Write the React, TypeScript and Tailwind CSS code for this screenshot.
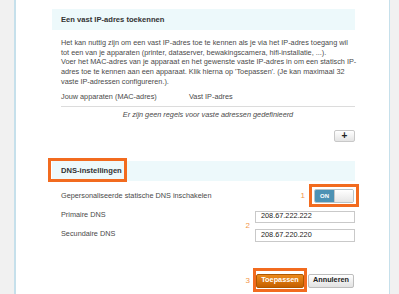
export default function App() {
  return (
    <div className="w-[399px] h-[294px] overflow-hidden bg-[#f1f1f1] flex font-['Liberation_Sans',Arial,sans-serif] text-[7.3px] text-[#4a4a4a]">
      <div className="ml-[14px] w-[376px] h-full bg-white border-l-2 border-r border-[#c6e0eb] pl-[36px] pr-[34px] pt-[9px]">
        <div className="h-[21px] bg-[#edf9fb] flex items-center pl-[9px] font-bold text-[#333] text-[7.6px]">
          Een vast IP-adres toekennen
        </div>
        <div className="pl-[9px] mt-[8px] leading-[9.7px] whitespace-nowrap">
          Het kan nuttig zijn om een vast IP-adres toe te kennen als je via het IP-adres toegang wil
          <br />
          tot een van je apparaten (printer, dataserver, bewakingscamera, hifi-installatie, ...).
          <br />
          Voer het MAC-adres van je apparaat en het gewenste vaste IP-adres in om een statisch IP-
          <br />
          adres toe te kennen aan een apparaat. Klik hierna op 'Toepassen'. (Je kan maximaal 32
          <br />
          vaste IP-adressen configureren.).
        </div>
        <div className="ml-[9px] mt-[5px] pb-[5px] h-[15px] leading-[10px] flex border-b border-[#dcdcdc]">
          <div className="w-[128px]">Jouw apparaten (MAC-adres)</div>
          <div>Vast IP-adres</div>
        </div>
        <div className="pl-[9px] pt-[3px] leading-[10px] text-center italic">
          Er zijn geen regels voor vaste adressen gedefinieerd
        </div>
        <div className="flex justify-end mt-[10px]">
          <div className="w-[21px] h-[12px] rounded-[2px] border border-[#c8c8c8] bg-gradient-to-b from-white to-[#e4e4e4] flex items-center justify-center text-[#222] font-bold text-[10px] leading-none">
            +
          </div>
        </div>
        <div className="relative mt-[19px] h-[20px] bg-[#edf9fb] flex items-center pl-[9px] font-bold text-[#333] text-[7.6px]">
          DNS-instellingen
          <div className="absolute left-[-4px] top-[-3px] bottom-[-1px] w-[79px] border-[3px] border-[#f26b1f]" />
        </div>
        <div className="mt-[4px] h-[23px] flex items-center pl-[9px]">
          <div className="flex-1">Gepersonaliseerde statische DNS inschakelen</div>
          <div className="text-[#f3964a] text-[8px] mr-[9px]">1</div>
          <div className="relative mr-[1px] w-[40px] h-[14px] rounded-[2px] border border-[#b8c4c8] flex overflow-visible">
            <div className="w-[19px] h-full bg-[#4d92b4] text-white font-bold text-[6px] flex items-center justify-center rounded-l-[1px]">
              ON
            </div>
            <div className="flex-1 h-full bg-gradient-to-b from-white to-[#e6e6e6] rounded-r-[1px] border-l border-[#c8c8c8]" />
            <div className="absolute left-[-6px] right-[-6px] top-[-6px] bottom-[-5px] border-[3px] border-[#f26b1f]" />
          </div>
        </div>
        <div className="mt-[3px] flex pl-[9px]">
          <div className="flex-1 flex flex-col">
            <div className="h-[12px] leading-[8px]">Primaire DNS</div>
            <div className="mt-[6px] h-[13px] leading-[10px]">Secundaire DNS</div>
          </div>
          <div className="self-center text-[#f3964a] text-[8px] mr-[5px]">2</div>
          <div className="flex flex-col w-[100px]">
            <div className="h-[12px] border border-[#c9c9c9] pl-[5px] flex items-center text-[#222]">208.67.222.222</div>
            <div className="mt-[6px] h-[13px] border border-[#c9c9c9] pl-[5px] flex items-center text-[#222]">208.67.220.220</div>
          </div>
        </div>
        <div className="mt-[32px] flex justify-end items-center">
          <div className="text-[#f3964a] text-[8px] mr-[6px]">3</div>
          <div className="relative w-[48px] h-[14px] rounded-[2px] border border-[#b05800] bg-gradient-to-b from-[#ec8a1a] to-[#c46000] text-white font-bold flex items-center justify-center">
            Toepassen
            <div className="absolute left-[-4px] right-[-4px] top-[-7px] bottom-[-5px] border-[3px] border-[#f26b1f]" />
          </div>
          <div className="ml-[4px] mr-[1px] w-[46px] h-[14px] rounded-[2px] border border-[#bdbdbd] bg-gradient-to-b from-white to-[#e2e2e2] text-[#222] font-bold flex items-center justify-center">
            Annuleren
          </div>
        </div>
      </div>
    </div>
  );
}
